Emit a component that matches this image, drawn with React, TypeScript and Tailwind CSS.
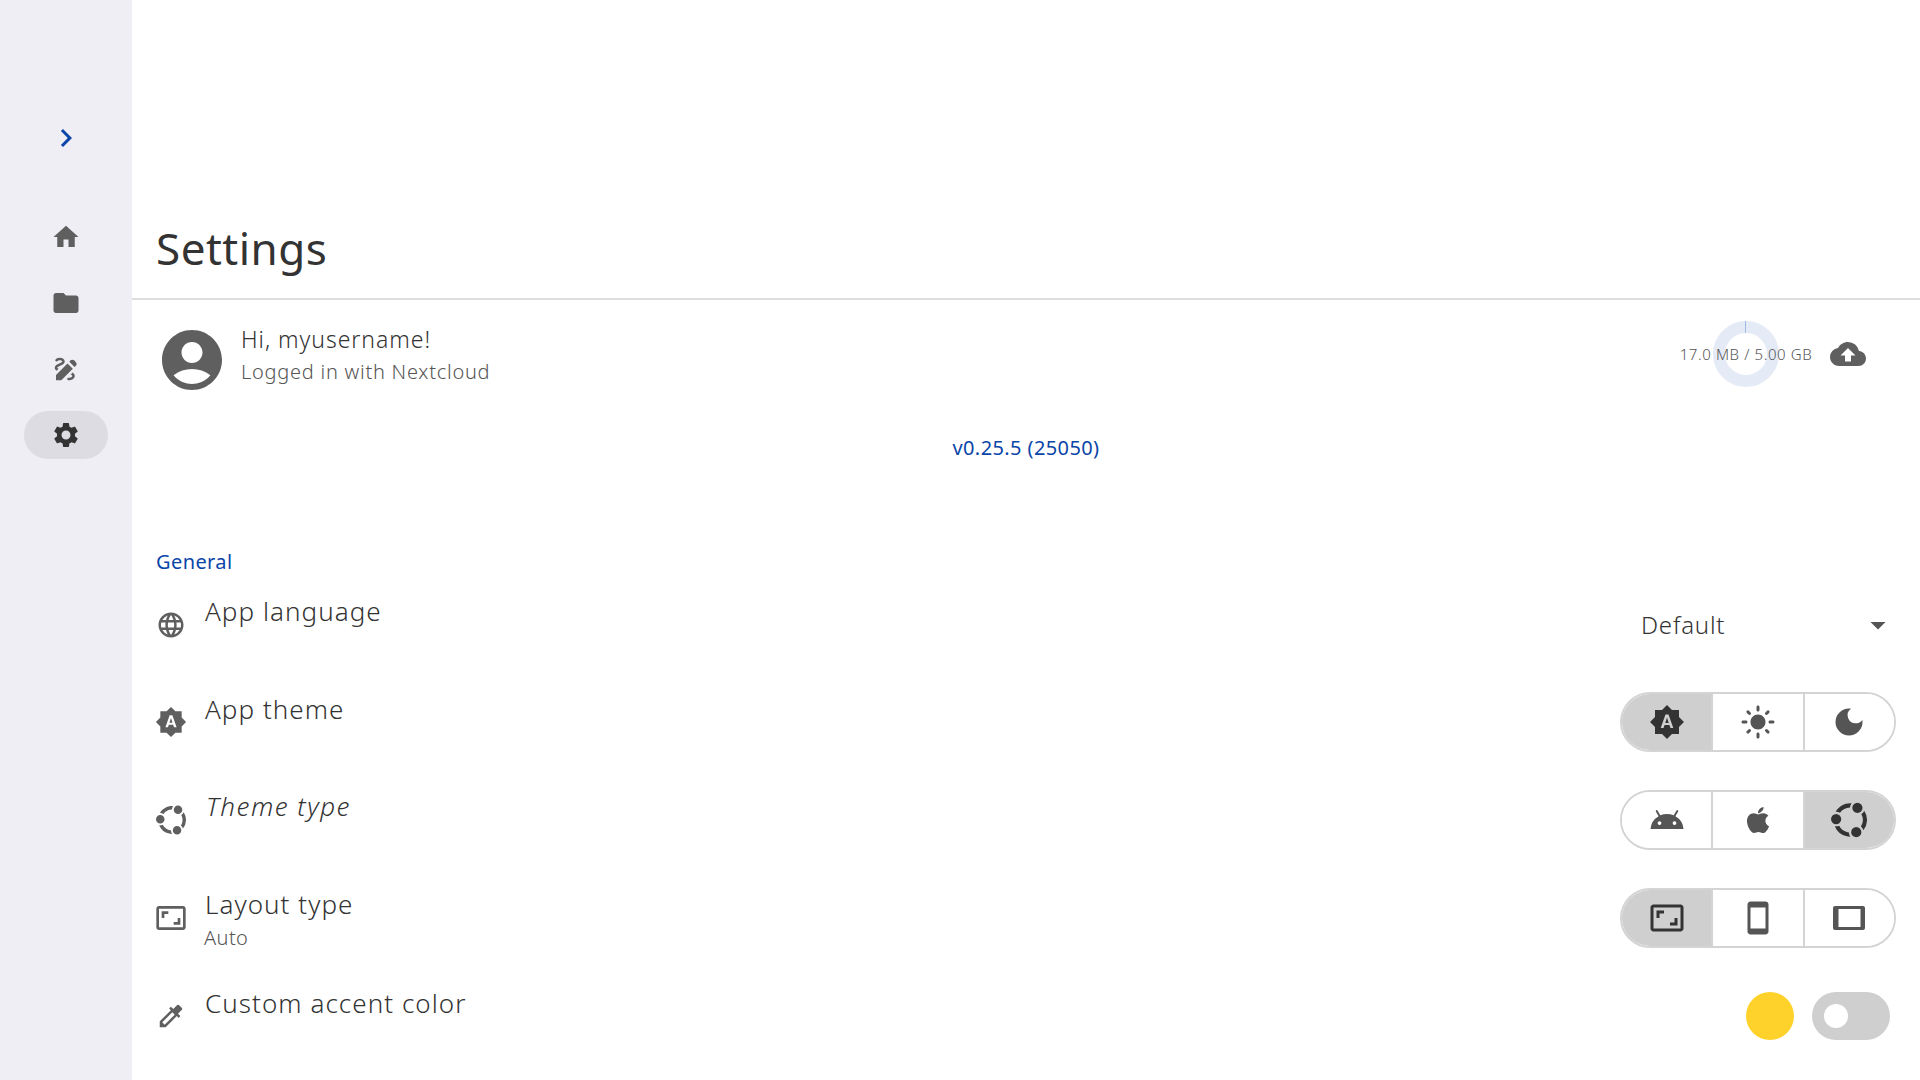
import React from "react";
import { MdHome, MdFolder, MdDraw, MdSettings, MdAccountCircle, MdCloudUpload, MdLanguage, MdBrightnessAuto, MdLightMode, MdDarkMode, MdAndroid, MdAspectRatio, MdSmartphone, MdColorize, MdChevronRight, MdArrowDropDown } from "react-icons/md";
import { FaApple } from "react-icons/fa";
import { SiUbuntu } from "react-icons/si";

const font = "font-['Noto_Sans','Open_Sans',sans-serif]";

function Landscape() {
  return (
    <svg width="36" height="36" viewBox="0 0 36 36" fill="currentColor">
      <path fillRule="evenodd" d="M4 6h28a2 2 0 0 1 2 2v20a2 2 0 0 1-2 2H4a2 2 0 0 1-2-2V8a2 2 0 0 1 2-2zM7.500 9v18h22V9z" />
    </svg>
  );
}

function Seg({ icons, active }: { icons: React.ReactNode[]; active: number }) {
  return (
    <div className="flex h-[60px] w-[276px] rounded-full border-2 border-[#d4d4d4] overflow-hidden">
      {icons.map((ic, i) => (
        <div key={i} className={`flex-1 flex items-center justify-center ${i > 0 ? "border-l-2 border-[#d4d4d4]" : ""} ${i === active ? "bg-[#cfcfcf] text-[#333]" : "bg-white text-[#555]"}`}>
          {ic}
        </div>
      ))}
    </div>
  );
}

function Row({ icon, title, sub, italic, right }: { icon: React.ReactNode; title: string; sub?: string; italic?: boolean; right: React.ReactNode }) {
  return (
    <div className="flex items-center h-[98px]">
      <div className="w-[48px] flex items-center text-[#5f5f5f] shrink-0">{icon}</div>
      <div className={`flex-1 self-start ${italic ? "mt-[18px] ml-[2px]" : sub ? "mt-[18px] ml-[1px]" : "mt-[19px] ml-[1px]"}`}>
        <div className={`text-[26px] leading-[34px] font-light text-[#333] ${italic ? "italic tracking-[1.5px]" : "tracking-[1.05px]"}`}>{title}</div>
        {sub && <div className="text-[20px] leading-[26px] font-light text-[#555] tracking-[0.4px] mt-[4px] -ml-[1px]">{sub}</div>}
      </div>
      {right}
    </div>
  );
}

export default function App() {
  return (
    <div className={`flex h-[1080px] w-[1920px] overflow-hidden bg-white ${font}`}>
      <aside className="w-[132px] shrink-0 bg-[#eeeef4] flex flex-col items-center pt-[120px] text-[#5f5f5f]">
        <MdChevronRight className="text-[#0a45a8] w-[36px] h-[36px]" />
        <div className="mt-[48px] h-[66px] flex items-center"><MdHome size={30} /></div>
        <div className="h-[66px] flex items-center"><MdFolder size={30} /></div>
        <div className="h-[66px] flex items-center"><MdDraw size={30} /></div>
        <div className="mt-[9px] h-[48px] w-[84px] rounded-full bg-[#dcdce2] flex items-center justify-center text-[#333]"><MdSettings size={30} /></div>
      </aside>
      <main className="flex-1 flex flex-col">
        <div className="h-[300px] flex items-end pl-[24px] pb-[21px] border-b-2 border-[#dedede]">
          <h1 className="text-[44px] leading-[58px] font-normal text-[#333] tracking-[0.5px]">Settings</h1>
        </div>
        <div className="flex items-center h-[120px] pl-[27px] pr-[24px]">
          <MdAccountCircle size={72} className="text-[#5f5f5f] -ml-[3px]" />
          <div className="ml-[13px] flex-1 -mt-[10px]">
            <div className="text-[23px] leading-[32px] font-light tracking-[0.95px] text-[#333] -mt-[1px]">Hi, myusername!</div>
            <div className="text-[20px] leading-[28px] font-light tracking-[0.75px] text-[#555] mt-[3px]">Logged in with Nextcloud</div>
          </div>
          <div className="relative w-[66px] h-[66px] rounded-full border-[12px] border-[#e5ebf6] mr-[51px] -mt-[12px]">
            <div className="absolute top-[-12px] left-[20px] w-[1px] h-[12px] bg-[#9dbbe6]" />
            <span className="absolute whitespace-nowrap text-[15px] font-light tracking-[0.6px] text-[#555] top-1/2 -translate-y-1/2 left-1/2 -translate-x-1/2">17.0 MB / 5.00 GB</span>
          </div>
          <MdCloudUpload size={36} className="text-[#5f5f5f] mr-[30px] -mt-[12px]" />
        </div>
        <div className="text-center text-[20px] leading-[28px] text-[#0a45a8] mt-[14px] tracking-[0.4px]">v0.25.5 (25050)</div>
        <div className="mt-[86px] pl-[24px] text-[20px] leading-[28px] text-[#0a45a8] tracking-[0.4px]">General</div>
        <div className="pl-[24px] pr-[24px] -mt-[1px]">
          <Row icon={<MdLanguage size={30} className="mt-[1px]" />} title="App language" right={
            <div className="w-[276px] pl-[21px] mt-[1px] flex items-center justify-between text-[24px] font-light text-[#333] tracking-[0.8px]">
              <span>Default</span>
              <MdArrowDropDown size={36} className="text-[#555]" />
            </div>
          } />
          <Row icon={<MdBrightnessAuto size={32} className="-ml-[1px]" />} title="App theme" right={
            <Seg active={0} icons={[<MdBrightnessAuto size={36} />, <MdLightMode size={36} />, <MdDarkMode size={36} />]} />
          } />
          <Row italic icon={<SiUbuntu size={30} />} title="Theme type" right={
            <Seg active={2} icons={[<MdAndroid size={36} />, <FaApple size={30} />, <SiUbuntu size={36} />]} />
          } />
          <Row icon={<MdAspectRatio size={32} className="-ml-[1px]" />} title="Layout type" sub="Auto" right={
            <Seg active={0} icons={[<MdAspectRatio size={36} />, <MdSmartphone size={36} />, <Landscape />]} />
          } />
          <Row icon={<MdColorize size={30} />} title="Custom accent color" right={
            <div className="flex items-center gap-[18px] pr-[6px]">
              <div className="w-[48px] h-[48px] rounded-full bg-[#ffd22b]" />
              <div className="w-[78px] h-[48px] rounded-full bg-[#cfcfcf] pl-[12px] flex items-center">
                <div className="w-[24px] h-[24px] rounded-full bg-white" />
              </div>
            </div>
          } />
        </div>
      </main>
    </div>
  );
}
